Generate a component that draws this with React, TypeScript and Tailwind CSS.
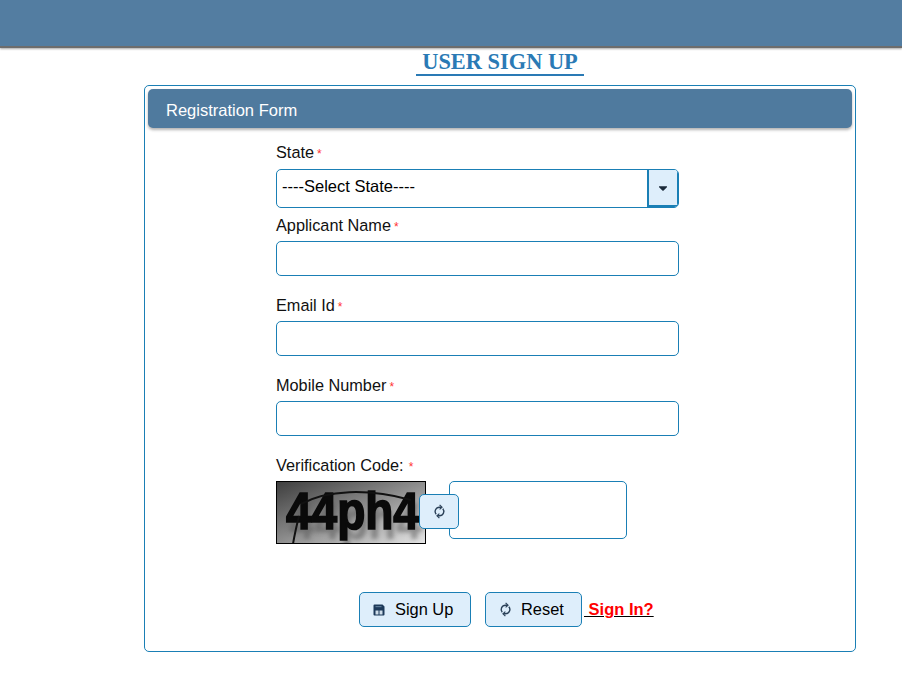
import { FaCaretDown } from "react-icons/fa";

const inputCls = "block w-[403px] h-[35px] border border-[#1a7fb5] rounded-[5px] bg-white outline-none";
const btnCls = "flex items-center h-[35px] border border-[#1a7fb5] rounded-[5px] bg-[#deeefb] text-[16.4px] text-black";

function SyncIcon({ className }: { className?: string }) {
  return (
    <svg className={className} width="13" height="15" viewBox="0 0 13 15" fill="none" stroke="#2b4158" strokeWidth="1.4">
      <path d="M8.2 3.2 H6.5 A4.3 4.3 0 0 0 3.2 10.3" />
      <path d="M4.8 11.8 H6.5 A4.3 4.3 0 0 0 9.8 4.7" />
      <path d="M6.6 0.8 L9 3.2 L6.6 5.4" strokeWidth="1.2" />
      <path d="M6.4 9.6 L4 11.8 L6.4 14.2" strokeWidth="1.2" />
    </svg>
  );
}

function SaveIcon({ className }: { className?: string }) {
  return (
    <svg className={className} width="12" height="12" viewBox="0 0 12 12">
      <path d="M1.5 0.5 H9.5 L11.5 2.5 V10.5 A1 1 0 0 1 10.5 11.5 H1.5 A1 1 0 0 1 0.5 10.5 V1.5 A1 1 0 0 1 1.5 0.5 Z" fill="#1d3a5a" />
      <rect x="2.5" y="6.5" width="3" height="4" fill="#cfdde9" />
      <rect x="6.5" y="6.5" width="3" height="4" fill="#cfdde9" />
      <rect x="2.5" y="2" width="6" height="1.2" fill="#5d7b96" />
    </svg>
  );
}

function Field({ label, top }: { label: string; top: string }) {
  return (
    <div className={top}>
      <label className="block h-[20px] leading-[18px] text-[16.3px] text-[#111]">
        {label}
        <span className="ml-[3px] text-[12px] text-[#f33]">*</span>
      </label>
      <input className={`${inputCls} mt-[5px]`} />
    </div>
  );
}

function Captcha() {
  return (
    <div className="relative w-[150px] h-[63px] border border-black overflow-hidden bg-gradient-to-br from-[#3f3f3f] to-[#e6e6e6]">
      <span className="absolute left-[9px] top-[6px] text-[46px] leading-[46px] font-bold [transform:scaleY(1.12)] text-[#0a0a0a] [-webkit-text-stroke:1.5px_#0a0a0a] [text-shadow:3px_9px_4px_rgba(90,90,90,0.55)]">
        44ph4
      </span>
      <svg className="absolute inset-0" width="150" height="63" fill="none" stroke="#111" strokeWidth="2">
        <path d="M16 62 C18 50 20 42 22 34" />
        <path d="M24 22 C50 8 90 6 134 18" />
      </svg>
    </div>
  );
}

export default function App() {
  return (
    <div className="min-h-[690px] bg-white font-['Liberation_Sans',Arial,sans-serif]">
      <header className="h-[48px] bg-[#537da1] border-b-2 border-[#6d6d6d] shadow-[0_1px_2px_rgba(0,0,0,0.35)]" />
      <h1 className="ml-[416px] w-[168px] h-[28px] border-b-2 border-[#2a7ab5] text-center font-['Liberation_Serif',serif] text-[22.4px] leading-[27px] font-bold text-[#2a7ab5]">
        USER SIGN UP
      </h1>
      <div className="ml-[144px] mt-[9px] w-[712px] h-[567px] border border-[#1a7fb5] rounded-[5px] p-[3px]">
        <div className="h-[39px] pl-[18px] pt-[3px] flex items-center rounded-[5px] bg-[#4f7a9e] shadow-[0_2px_3px_rgba(0,0,0,0.3)] text-[16.5px] text-white">
          Registration Form
        </div>
        <div className="ml-[128px] w-[403px]">
          <div className="mt-[14px]">
            <label className="block h-[20px] leading-[20px] text-[16.3px] text-[#111]">
              State
              <span className="ml-[3px] text-[12px] text-[#f33]">*</span>
            </label>
            <div className="mt-[7px] flex w-[403px] h-[39px] border border-[#1a7fb5] rounded-[5px] overflow-hidden">
              <div className="flex-1 pl-[5px] pb-[5px] flex items-center text-[16.5px] text-black">----Select State----</div>
              <div className="w-[31px] flex items-center justify-center bg-[#deeefb] border-l-2 border-r border-b-2 border-[#1a7fb5]">
                <FaCaretDown className="text-[#1b2a3a] text-[14px]" />
              </div>
            </div>
          </div>
          <Field label="Applicant Name" top="mt-[8px]" />
          <Field label="Email Id" top="mt-[20px]" />
          <Field label="Mobile Number" top="mt-[20px]" />
          <div className="mt-[20px]">
            <label className="block h-[20px] leading-[18px] text-[16.3px] text-[#111]">
              Verification Code:
              <span className="ml-[5px] text-[12px] text-[#f33]">*</span>
            </label>
            <div className="mt-[5px] flex items-start">
              <Captcha />
              <button className="relative z-10 -ml-[7px] mt-[13px] w-[40px] h-[35px] flex items-center justify-center border border-[#1a7fb5] rounded-[5px] bg-[#deeefb]">
                <SyncIcon />
              </button>
              <input className="-ml-[10px] w-[178px] h-[58px] border border-[#1a7fb5] rounded-[5px] bg-white outline-none" />
            </div>
          </div>
          <div className="mt-[48px] ml-[83px] flex items-center">
            <button className={`${btnCls} w-[112px] pl-[13px]`}>
              <SaveIcon className="mr-[10px]" />
              Sign Up
            </button>
            <button className={`${btnCls} ml-[14px] w-[97px] pl-[13px]`}>
              <SyncIcon className="mr-[9px]" />
              Reset
            </button>
            <a href="#" className="ml-[2px] underline decoration-black text-[16.5px] font-bold text-[#f00] whitespace-pre">
              {" Sign In?"}
            </a>
          </div>
        </div>
      </div>
    </div>
  );
}
